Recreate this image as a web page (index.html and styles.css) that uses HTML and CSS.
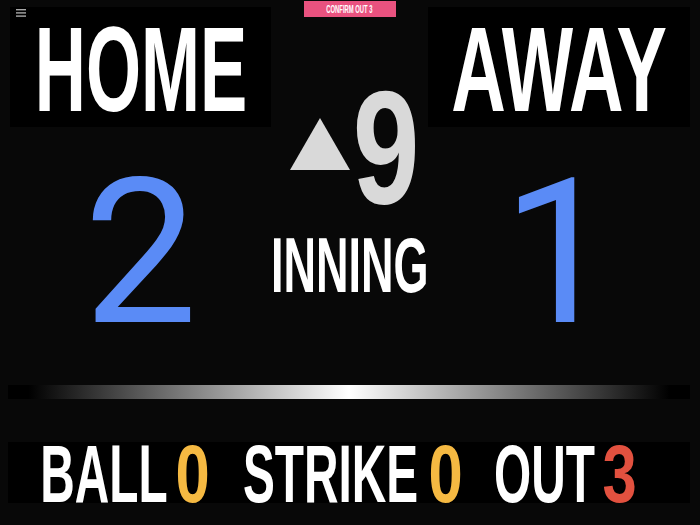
FILE: index.html
```html
<!DOCTYPE html>
<html lang="en">
<head>
<meta charset="utf-8">
<title>Scoreboard</title>
<link rel="stylesheet" href="styles.css">
</head>
<body>
<div class="board">
  <button class="menu" aria-label="Menu">
    <svg viewBox="0 0 10 8" width="10" height="8"><rect x="0" y="0" width="10" height="1.4"/><rect x="0" y="3.2" width="10" height="1.4"/><rect x="0" y="6.4" width="10" height="1.4"/></svg>
  </button>
  <main class="top">
    <section class="team">
      <div class="name"><span class="sq sq-home">HOME</span></div>
      <div class="score">2</div>
    </section>
    <section class="center">
      <div class="confirm"><span class="sq sq-btn">CONFIRM OUT 3</span></div>
      <div class="inning-num">
        <svg class="tri" viewBox="0 0 60 52"><polygon points="30,0 60,52 0,52"/></svg>
        <div class="num"><span class="sq sq-num">9</span></div>
      </div>
      <div class="inning-label"><span class="sq sq-lbl">INNING</span></div>
    </section>
    <section class="team">
      <div class="name"><span class="sq sq-away">AWAY</span></div>
      <div class="score">1</div>
    </section>
  </main>
  <div class="bar"></div>
  <div class="counts">
    <div class="ci w-ball"><span class="sq sq-word">BALL</span></div>
    <div class="ci w-dig gap-s c-yel"><span class="sq sq-dig">0</span></div>
    <div class="ci w-strike gap-l"><span class="sq sq-word">STRIKE</span></div>
    <div class="ci w-dig gap-s c-yel"><span class="sq sq-dig">0</span></div>
    <div class="ci w-out gap-l"><span class="sq sq-word">OUT</span></div>
    <div class="ci w-dig gap-s c-red"><span class="sq sq-dig">3</span></div>
  </div>
</div>
</body>
</html>
```
FILE: styles.css
```css
html, body {
  margin: 0;
  padding: 0;
  background: #080808;
}
body {
  font-family: "Liberation Sans", Arial, sans-serif;
}
.board {
  position: relative;
  width: 700px;
  height: 525px;
  overflow: hidden;
}
.menu {
  position: absolute;
  left: 16px;
  top: 9px;
  padding: 0;
  margin: 0;
  border: 0;
  background: none;
  width: 10px;
  height: 8px;
  line-height: 0;
  z-index: 2;
}
.menu svg { fill: #a8a8a8; display: block; }

.sq {
  display: inline-block;
  white-space: nowrap;
  transform-origin: 50% 50%;
  flex: none;
}

.top {
  display: grid;
  grid-template-columns: 261px 157px 262px;
  padding: 0 10px;
  height: 385px;
  box-sizing: border-box;
}
.team {
  padding-top: 7px;
  display: flex;
  flex-direction: column;
}
.name {
  height: 117px;
  padding-top: 3px;
  background: #000;
  display: flex;
  justify-content: center;
  align-items: center;
  color: #fff;
  font-weight: 700;
  font-size: 120px;
  line-height: 120px;
}
.sq-home { transform: scaleX(0.59); }
.sq-away { transform: scaleX(0.63); }

.score {
  font-family: Roboto, "Liberation Sans", sans-serif;
  font-weight: 400;
  font-size: 203px;
  line-height: 200px;
  color: #5a8bf6;
  text-align: center;
  margin-top: 26px;
}

.center {
  display: flex;
  flex-direction: column;
  align-items: center;
}
.confirm {
  margin-top: 1px;
  width: 92px;
  height: 16px;
  background: #e9527f;
  color: #fff;
  display: flex;
  justify-content: center;
  align-items: center;
  font-size: 10.5px;
  font-weight: 700;
  line-height: 16px;
}
.sq-btn { transform: scaleX(0.56); }

.inning-num {
  margin-top: 65px;
  height: 130px;
  display: flex;
  align-items: center;
  gap: 8px;
  padding-left: 6px;
}
.tri {
  width: 60px;
  height: 52px;
  fill: #d9d9d9;
  margin-bottom: 6px;
  flex: none;
}
.num {
  width: 57px;
  display: flex;
  justify-content: center;
  font-size: 162px;
  line-height: 130px;
  font-weight: 700;
  color: #d9d9d9;
}
.sq-num { transform: scaleX(0.74); }

.inning-label {
  margin-top: 18px;
  height: 70px;
  width: 100%;
  display: flex;
  justify-content: center;
  font-size: 77px;
  line-height: 70px;
  font-weight: 700;
  color: #fff;
}
.sq-lbl { transform: scaleX(0.585); }

.bar {
  margin-left: 8px;
  width: 682px;
  height: 14px;
  background: linear-gradient(90deg, #000 3%, #fff 50%, #000 97%);
}

.counts {
  margin: 43px 0 0 8px;
  width: 682px;
  height: 61px;
  box-sizing: border-box;
  padding: 2px 0 0 35px;
  background: #000;
  display: flex;
  font-size: 81px;
  line-height: 61px;
  font-weight: 700;
  color: #fff;
}
.ci {
  display: flex;
  justify-content: center;
  flex: none;
}
.w-ball { width: 122px; }
.w-strike { width: 174px; }
.w-out { width: 95px; }
.w-dig { width: 30px; }
.gap-s { margin-left: 13px; }
.gap-l { margin-left: 36px; }
.c-yel { color: #f5b942; }
.c-red { color: #e2513f; }
.sq-word { transform: scaleX(0.59); }
.sq-dig { transform: scaleX(0.76); }
```
